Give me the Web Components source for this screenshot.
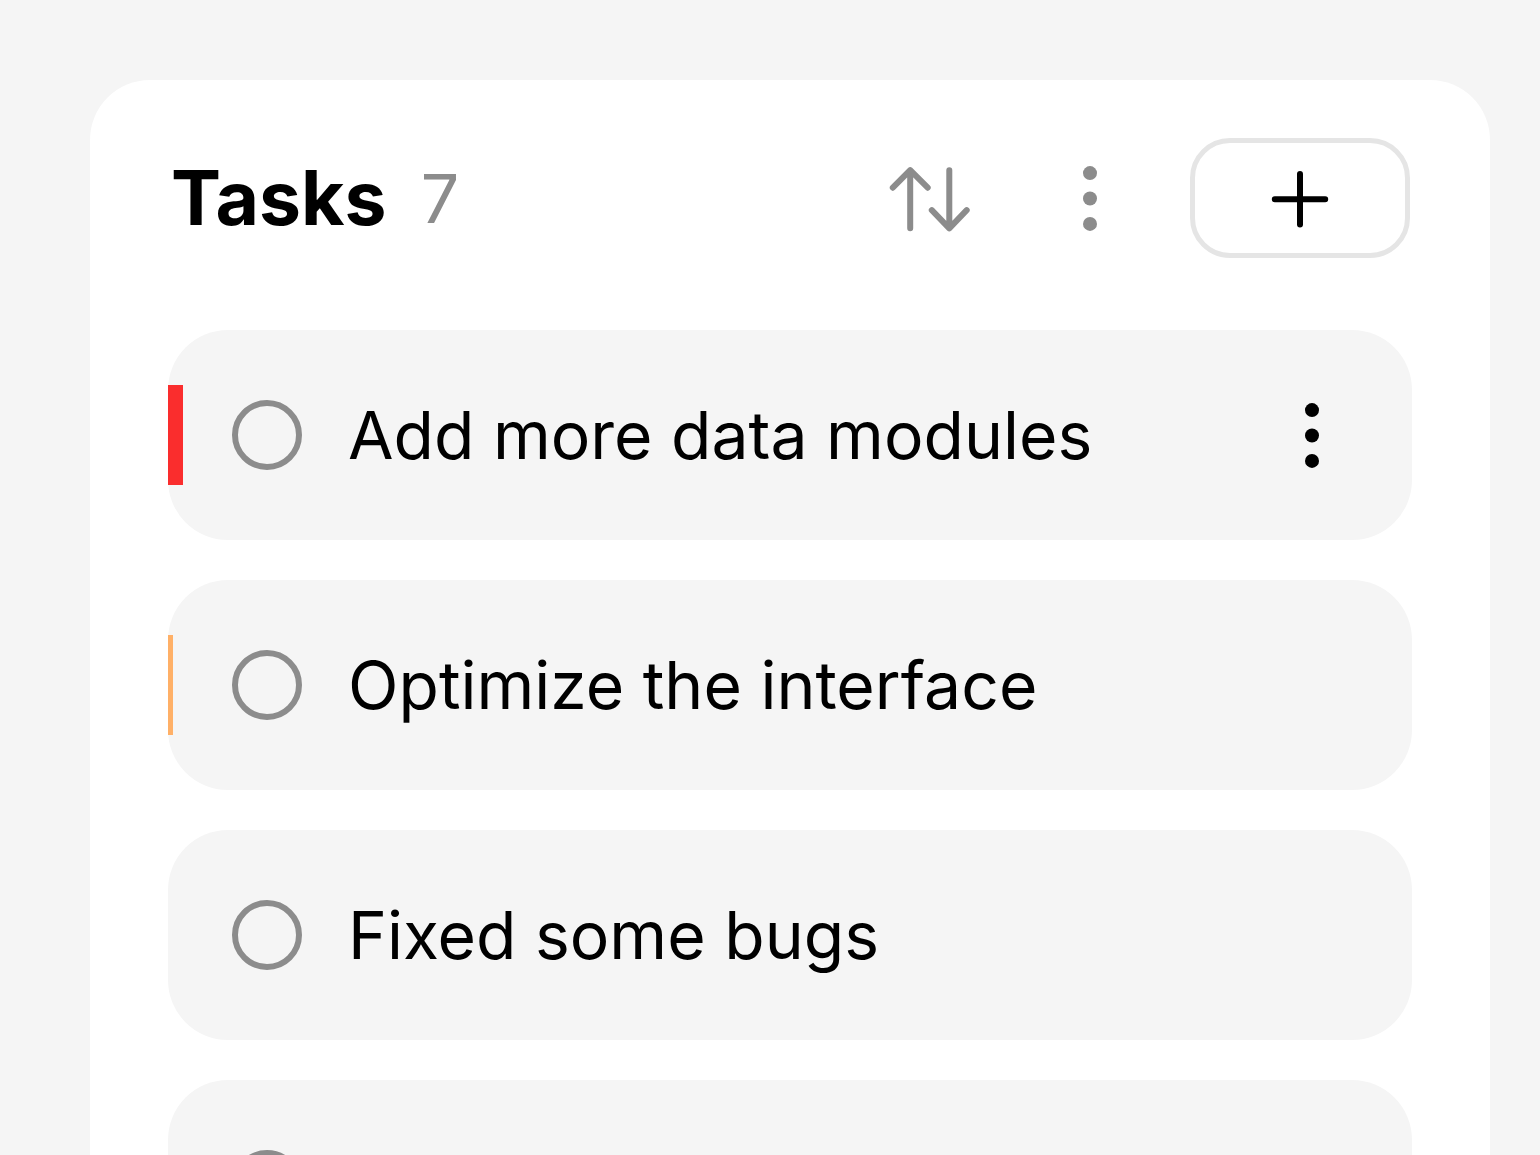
<!DOCTYPE html>
<html lang="en">
<head>
<meta charset="utf-8">
<title>Tasks</title>
<style>
  html, body { height: 100%; }
  body {
    margin: 0;
    overflow: hidden;
    background: #f5f5f5;
    color: #000;
    font-family: Inter, "Liberation Sans", sans-serif;
    font-size: 66px;
    line-height: 84px;
    --muted: #8c8c8c;
    --surface: #f5f5f5;
  }
</style>
</head>
<body>
<task-board>
  <task-header slot="header" heading="Tasks" count="7"></task-header>
  <task-item priority="high" menu>Add more data modules</task-item>
  <task-item priority="medium">Optimize the interface</task-item>
  <task-item>Fixed some bugs</task-item>
  <task-item></task-item>
</task-board>

<script>
  const define = (name, html, setup) => {
    const template = document.createElement('template');
    template.innerHTML = html;
    customElements.define(name, class extends HTMLElement {
      constructor() {
        super();
        this.attachShadow({ mode: 'open' }).append(template.content.cloneNode(true));
      }
      connectedCallback() {
        if (setup) setup(this, this.shadowRoot);
      }
    });
  };

  define('dots-icon', `
    <style>
      :host { display: block; }
      svg { display: block; width: 100%; }
    </style>
    <svg viewBox="0 0 100 120" fill="currentColor" aria-hidden="true">
      <circle cx="50" cy="35.1" r="7"/><circle cx="50" cy="60.5" r="7"/><circle cx="50" cy="85.9" r="7"/>
    </svg>`);

  define('task-board', `
    <style>
      :host { display: block; padding: 80px 50px 0 90px; }
      main { background: #fff; border-radius: 60px; padding: 58px 78px 80px; }
      .list { display: flex; flex-direction: column; gap: 40px; margin-top: 72px; }
    </style>
    <main>
      <slot name="header"></slot>
      <div class="list"><slot></slot></div>
    </main>`);

  define('task-header', `
    <style>
      :host { display: block; }
      header { display: flex; align-items: center; padding: 0 2px 0 3px; }
      h1 { margin: 0; font-size: 75px; line-height: 96px; font-weight: 700; }
      .count { margin-left: 34px; font-size: 68px; color: var(--muted); }
      .actions { display: flex; gap: 50px; margin-left: auto; }
      button {
        box-sizing: border-box; height: 120px; padding: 0; border: 0; background: none;
        color: var(--muted); cursor: pointer; display: flex; align-items: center; justify-content: center;
      }
      svg { display: block; flex: none; }
      .sort { width: 120px; }
      .more { width: 100px; }
      .more dots-icon { width: 100px; }
      .add { width: 220px; border: 5px solid #e5e5e5; border-radius: 40px; color: #000; }
    </style>
    <header>
      <h1></h1>
      <span class="count"></span>
      <div class="actions">
        <button class="sort" type="button" aria-label="Sort">
          <svg width="120" height="120" viewBox="0 0 120 120" fill="none" stroke="currentColor" stroke-width="6" stroke-linecap="round" stroke-linejoin="round" aria-hidden="true">
            <path d="M40.2 90.3V32.2M22.8 49.7L40.2 32.2L57.7 49.7"/>
            <path d="M79.3 32.2V90.3M61.8 72.2L79.3 90.3L96.7 72.2"/>
          </svg>
        </button>
        <button class="more" type="button" aria-label="More"><dots-icon></dots-icon></button>
        <button class="add" type="button" aria-label="Add">
          <svg width="60" height="60" viewBox="0 0 60 60" fill="none" stroke="currentColor" stroke-width="6" stroke-linecap="round" aria-hidden="true">
            <path d="M4.8 31.2H55.2M30 6V56.4"/>
          </svg>
        </button>
      </div>
    </header>`, (el, root) => {
    root.querySelector('h1').textContent = el.getAttribute('heading');
    root.querySelector('.count').textContent = el.getAttribute('count');
  });

  define('task-item', `
    <style>
      :host {
        display: flex; align-items: center; box-sizing: border-box; min-height: 210px;
        padding-right: 50px; background: var(--surface); border-radius: 60px;
      }
      .marker { flex: none; width: 64px; height: 100px; }
      :host([priority="high"]) .marker { box-shadow: inset 15px 0 #fa2d2d; }
      :host([priority="medium"]) .marker { box-shadow: inset 5px 0 #ffb067; }
      label { display: flex; align-items: center; gap: 46px; flex: 1; min-width: 0; cursor: pointer; }
      input {
        appearance: none; box-sizing: border-box; flex: none; width: 70px; height: 70px; margin: 0;
        border: 6px solid var(--muted); border-radius: 50%; cursor: pointer;
      }
      input:checked { background: var(--muted); }
      button { flex: none; width: 100px; padding: 0; border: 0; background: none; color: #000; cursor: pointer; }
      :host(:not([menu])) button { display: none; }
    </style>
    <span class="marker"></span>
    <label><input type="checkbox"><span><slot></slot></span></label>
    <button type="button" aria-label="More"><dots-icon></dots-icon></button>`);
</script>
</body>
</html>
